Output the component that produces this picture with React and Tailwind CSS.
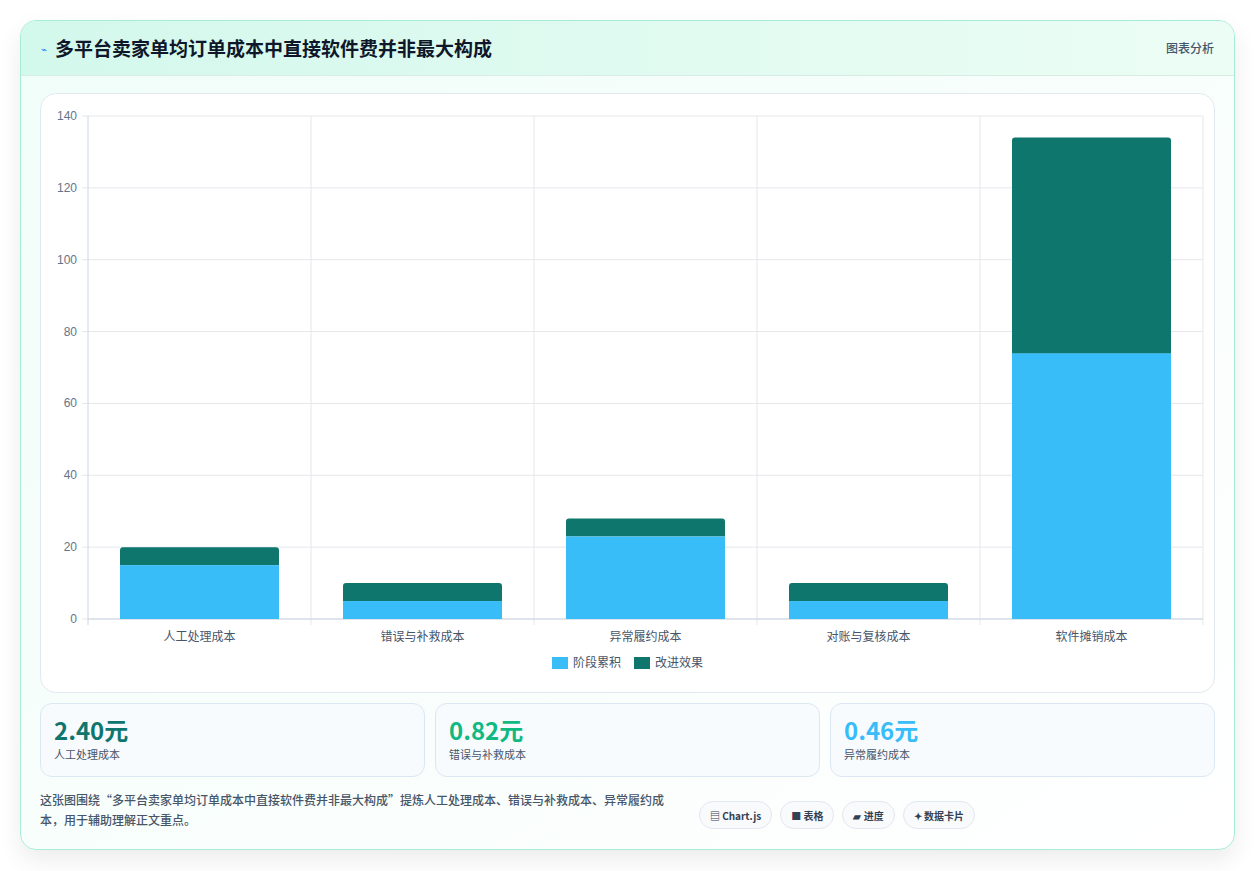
export default function App() {
  const L = 47, R = 1162, T = 22, B = 525;
  const sc = (B - T) / 140;
  const cats = ["人工处理成本", "错误与补救成本", "异常履约成本", "对账与复核成本", "软件摊销成本"];
  const a = [15, 5, 23, 5, 74];
  const b = [5, 5, 5, 5, 60];
  const cw = (R - L) / 5;
  const font = { fontFamily: '"Noto Sans CJK SC", "Liberation Sans", sans-serif' };
  return (
    <div className="min-h-[871px] bg-white p-5 pb-0" style={font}>
      <div className="rounded-2xl border border-[#a7ecd9] bg-gradient-to-br from-[#f0fdf8] to-white shadow-[0_10px_25px_rgba(0,0,0,0.08)] overflow-hidden h-[830px]">
        <div className="h-[55px] flex items-center justify-between px-5 bg-gradient-to-r from-[#d3f8ec] to-[#ecfdf5] border-b border-[#d8ece6]">
          <div className="flex items-center gap-2">
            <span className="text-[10px] text-[#3b82f6]">⌁</span>
            <span className="text-[19px] font-bold text-[#0f172a]">多平台卖家单均订单成本中直接软件费并非最大构成</span>
          </div>
          <span className="text-[12px] text-[#475569] font-medium">图表分析</span>
        </div>
        <div className="px-[19px] pt-[17px]">
          <div className="h-[600px] rounded-2xl border border-[#e2e8f0] bg-white">
            <svg width="1175" height="598">
              {[0, 20, 40, 60, 80, 100, 120, 140].map((v) => {
                const y = B - v * sc;
                return (
                  <g key={v}>
                    <line x1={L - 6} x2={R} y1={y} y2={y} stroke="#e5e7eb" />
                    <text x={L - 11} y={y + 4} textAnchor="end" fontSize="12" fill="#64748b" fontFamily="Liberation Sans">{v}</text>
                  </g>
                );
              })}
              {[0, 1, 2, 3, 4, 5].map((i) => (
                <line key={i} x1={L + i * cw} x2={L + i * cw} y1={T} y2={B + 6} stroke={i === 0 ? "#cbd5e1" : "#e5e7eb"} />
              ))}
              <line x1={L} x2={R} y1={B} y2={B} stroke="#cbd5e1" />
              {cats.map((c, i) => {
                const x = L + i * cw + 32;
                const w = cw - 64;
                const ya = B - a[i] * sc;
                const yb = ya - b[i] * sc;
                return (
                  <g key={c}>
                    <rect x={x} y={ya} width={w} height={a[i] * sc} fill="#38bdf8" />
                    <path d={`M${x} ${ya} V${yb + 3} Q${x} ${yb} ${x + 3} ${yb} H${x + w - 3} Q${x + w} ${yb} ${x + w} ${yb + 3} V${ya} Z`} fill="#0f766e" />
                    <text x={L + i * cw + cw / 2} y={547} textAnchor="middle" fontSize="12" fill="#475569">{c}</text>
                  </g>
                );
              })}
              <rect x={511} y={563} width={16} height={12} fill="#38bdf8" />
              <text x={532} y={573} fontSize="12" fill="#475569">阶段累积</text>
              <rect x={593} y={563} width={16} height={12} fill="#0f766e" />
              <text x={614} y={573} fontSize="12" fill="#475569">改进效果</text>
            </svg>
          </div>
          <div className="grid grid-cols-3 gap-[10px] mt-[10px]">
            {[["2.40元", "人工处理成本", "text-[#0f766e]"], ["0.82元", "错误与补救成本", "text-[#10b981]"], ["0.46元", "异常履约成本", "text-[#38bdf8]"]].map(([v, l, c]) => (
              <div key={l} className="h-[74px] rounded-xl border border-[#dbe7f3] bg-[#f8fbfe] px-[13px] pt-[11px]">
                <div className={`text-[24px] leading-[30px] font-bold ${c}`}>{v}</div>
                <div className="text-[11px] text-[#475569] mt-[1px]">{l}</div>
              </div>
            ))}
          </div>
          <div className="flex items-center justify-between mt-[13px] pr-[240px]">
            <p className="text-[12px] leading-[20px] text-[#475569] font-medium w-[645px]">这张图围绕“多平台卖家单均订单成本中直接软件费并非最大构成”提炼人工处理成本、错误与补救成本、异常履约成本，用于辅助理解正文重点。</p>
            <div className="flex gap-2 mt-[10px]">
              {["▤ Chart.js", "■ 表格", "▰ 进度", "✦ 数据卡片"].map((t) => (
                <span key={t} className="h-[28px] flex items-center px-[10px] rounded-full border border-[#e2e8f0] bg-[#f8fafc] text-[10px] font-bold text-[#334155]">{t}</span>
              ))}
            </div>
          </div>
        </div>
      </div>
    </div>
  );
}
